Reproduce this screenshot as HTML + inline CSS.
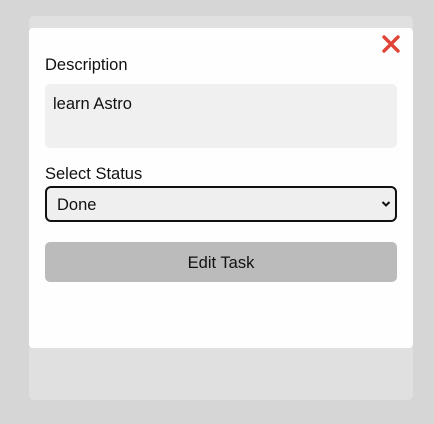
<!DOCTYPE html>
<html><head><style>
html,body{margin:0;padding:0;}
body{width:434px;height:424px;background:#d6d6d6;position:relative;overflow:hidden;font-family:"Liberation Sans",sans-serif;color:#111;}
.outer{position:absolute;left:29px;top:16px;width:384px;height:384px;background:#e0e0e0;border-radius:5px;}
.inner{position:absolute;left:29px;top:28px;width:384px;height:320px;background:#fefefe;border-radius:4px;}
.x{position:absolute;left:381px;top:35px;}
.lbl{position:absolute;left:45px;font-size:16.5px;}
.ta{position:absolute;left:45px;top:84px;width:352px;height:64px;background:#f0f0f0;border-radius:5px;}
.ta span{position:absolute;left:8px;top:11px;font-size:16.5px;}
.sel{position:absolute;left:45px;top:186px;width:348px;height:32px;border:2px solid #111;border-radius:6px;background:#efefef;}
.sel span{position:absolute;left:10px;top:8px;font-size:16.5px;}
.btn{position:absolute;left:45px;top:242px;width:352px;height:40px;background:#bbbbbb;border-radius:5px;text-align:center;line-height:42px;font-size:16.5px;}
</style></head><body>
<div class="outer"></div>
<div class="inner"></div>
<svg class="x" width="20" height="18" viewBox="0 0 20 18"><path d="M3 2 L17 16 M17 2 L3 16" stroke="#e04436" stroke-width="3.4" stroke-linecap="round"/></svg>
<div class="lbl" style="top:56px">Description</div>
<div class="ta"><span>learn Astro</span></div>
<div class="lbl" style="top:165px">Select Status</div>
<div class="sel"><span>Done</span>
<svg style="position:absolute;right:4px;top:12px" width="10" height="8" viewBox="0 0 10 8"><path d="M1.5 2 L5 5.5 L8.5 2" stroke="#111" stroke-width="2" fill="none"/></svg></div>
<div class="btn">Edit Task</div>
</body></html>
